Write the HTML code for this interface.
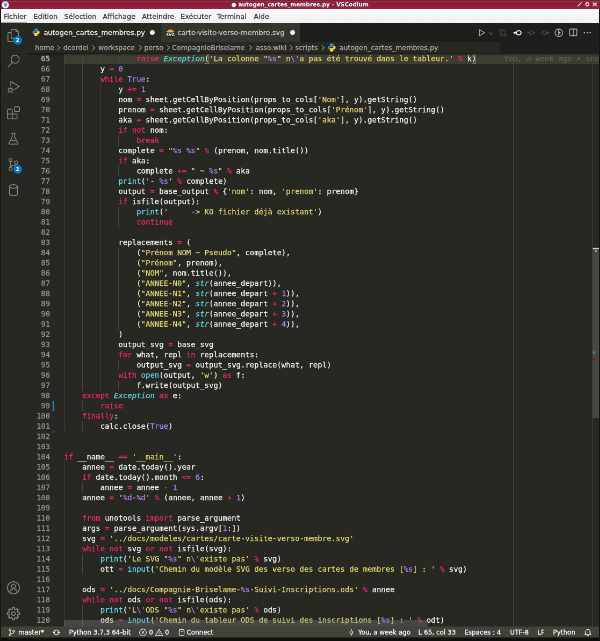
<!DOCTYPE html>
<html lang="fr"><head><meta charset="utf-8"><title>autogen_cartes_membres.py - VSCodium</title>
<style>
html,body{margin:0;padding:0;background:#1a1a17;overflow:hidden}
body{width:600px;height:641px;position:relative}
#root{--s:0.5373;position:absolute;left:0;top:0;width:calc(600px/var(--s));height:calc(641px/var(--s));transform:scale(0.5373);transform-origin:0 0;will-change:transform;background:#141411;font-family:"DejaVu Sans","Liberation Sans",sans-serif;font-size:13px;color:#f8f8f2;overflow:hidden}
#root *{box-sizing:border-box}
.abs{position:absolute}
.tx{position:absolute;white-space:pre;-webkit-text-stroke:0.3px}
svg{position:absolute;overflow:visible}
/* title bar */
#title{left:0;top:0;width:100%;height:calc(9.3px/var(--s));background:linear-gradient(#5e1a2d 0,#5e1a2d 1.2px,#a03852 1.6px,#a03852 2.8px,#8a1e3b 3.6px,#8a1e3b 13.5px,#9a2c48 14.5px,#9a2c48 15.5px,#5a1628 17px)}
#title .tl{display:none}
#title .tt{left:0;right:0;top:0;text-align:center;color:#fff;font-weight:bold;font-size:10.55px;line-height:calc(9.1px/var(--s));-webkit-text-stroke:0}
/* menu */
#menu{left:calc(1px/var(--s));top:calc(9.3px/var(--s));width:calc(598.2px/var(--s));height:calc(13.7px/var(--s));background:linear-gradient(#fafafa,#f1f1f1);color:#363636;font-size:13px;line-height:calc(13.5px/var(--s))}
#menu .tx{top:1px}
/* workbench */
#act{left:calc(1px/var(--s));top:calc(22.8px/var(--s));width:48px;height:calc(603.5px/var(--s));background:#272822}
#tabs{left:calc(26.8px/var(--s));top:calc(23px/var(--s));width:calc(572.4px/var(--s));height:35px;background:#1e1f1c}
.tab{position:absolute;top:0;height:35px}
.tab .tx{font-size:13px;line-height:35px;top:0.6px}
#bc{left:calc(26.8px/var(--s));top:calc(41.8px/var(--s));width:calc(572.4px/var(--s));height:22px;background:#1e1f1c}
#bcin{left:calc(26.8px/var(--s));top:calc(41.8px/var(--s));width:calc(473px/var(--s));height:22px;background:#272822}
.bct{top:calc(41.9px/var(--s));color:#acaca6;font-size:12.7px;line-height:22px}
#ed{left:calc(26.8px/var(--s));top:calc(53.4px/var(--s));width:calc(572.4px/var(--s));height:calc(572.9px/var(--s));background:#272822;overflow:hidden}
#nums{position:absolute;left:0;top:0.75px;width:43.3px;font:14px/19px "DejaVu Sans Mono","Liberation Mono",monospace;color:#96968f;text-align:right;-webkit-text-stroke:0.32px}
#nums div{position:absolute;left:0;width:43.3px;height:19px}
#nums .cur{color:#c2c2bf}
#code{position:absolute;left:69.4px;top:0.75px;font:14px/19px "DejaVu Sans Mono","Liberation Mono",monospace;color:#f8f8f2;white-space:pre;-webkit-text-stroke:0.25px}
#code div{position:absolute;left:0;height:19px;white-space:pre}
#code i,#nums i{font-style:normal}
#code .k{color:#f92672}#code .s{color:#e6db74}#code .n{color:#ae81ff}#code .f{color:#66d9ef}#code .t{color:#66d9ef;font-style:italic}
#guides{position:absolute;left:69.4px;top:0.75px}
#guides b{position:absolute;width:1px;background:#464741}
#curline{position:absolute;left:69.4px;top:0.75px;width:1000px;height:19px;background:#3e3d32}
#status{left:calc(1px/var(--s));top:calc(626.3px/var(--s));width:calc(598.2px/var(--s));height:22px;background:#414339}
.st{top:calc(626.3px/var(--s));color:#fff;font-size:12px;line-height:22px}

.badge{position:absolute;width:16px;height:16px;border-radius:8px;background:#007acc;color:#fff;font-size:9px;font-weight:bold;line-height:16px;text-align:center}
.dot{position:absolute;width:8.8px;height:8.8px;border-radius:50%;background:#f8f8f2}
#ruler{position:absolute;left:calc(513.2px/var(--s) - 49.9px);top:0;width:1px;height:100%;background:#464741}
#blame{position:absolute;left:calc(504px/var(--s) - 49.9px);top:0.75px;font:14px/19px "DejaVu Sans Mono","Liberation Mono",monospace;color:#63635b;white-space:pre;-webkit-text-stroke:0.2px}
.bm{position:absolute;top:0.75px;height:19px;width:8.43px;border:1px solid #888;background:rgba(0,100,0,0.1)}
#vsb{position:absolute;right:0;top:0;width:13.4px;height:100%;border-left:1.6px solid #383932}
#vsl{position:absolute;right:0;width:12.2px;top:calc(194.6px/var(--s));height:calc(170px/var(--s));background:rgba(121,121,121,0.4)}
#hsl{position:absolute;left:69.4px;bottom:0;height:12px;width:calc(364px/var(--s));background:rgba(121,121,121,0.4)}
#shadow{position:absolute;left:0;top:0;width:100%;height:6px;box-shadow:rgba(0,0,0,0.75) 0 6px 6px -6px inset}
#gmod{position:absolute;left:calc(52.5px/var(--s) - 49.9px);top:calc(0.75px + 34*19px);width:3.6px;height:19px;background:#1b8cc0}
#gdel{position:absolute;left:calc(52.6px/var(--s) - 49.9px);top:calc(0.75px + 37*19px - 4px);width:0;height:0;border-left:4.5px solid #a3161c;border-top:4px solid transparent;border-bottom:4px solid transparent}
</style></head><body>
<div id="root">
<div id="title" class="abs"><div class="tl"></div><svg width="16" height="16" viewBox="0 0 16 16" style="left:calc(5.5px/var(--s) - 8px);top:calc(4.8px/var(--s) - 8px)"><circle cx="8" cy="8" r="6.600" fill="#eef4fb"/><path d="M4.600 5.500l3-1.500 3.400 1.200.6 2.600L8.600 12l-2.400-2.200z" fill="#62a4ea"/><path d="M7 9l1.600 3 1-3z" fill="#2f7de0"/></svg>
<svg width="12" height="12" viewBox="0 0 12 12" style="left:calc(579.75px/var(--s) - 6px);top:calc(4.5px/var(--s) - 6px)" stroke="#ecccd4" stroke-width="2" fill="none"><path d="M2.500 9.500L9.500 2.500"/></svg>
<svg width="12" height="12" viewBox="0 0 12 12" style="left:calc(587.25px/var(--s) - 6px);top:calc(4.5px/var(--s) - 6px)" stroke="#ecccd4" stroke-width="2.200" fill="none"><circle cx="6" cy="6" r="2.800"/></svg>
<svg width="12" height="12" viewBox="0 0 12 12" style="left:calc(594.85px/var(--s) - 6px);top:calc(4.5px/var(--s) - 6px)" stroke="#ecccd4" stroke-width="2.200" fill="none"><path d="M2.200 2.800L9.800 9.200M9.800 2.800L2.200 9.200"/></svg>
<div class="abs" style="left:0;top:0;width:1.7px;height:calc(9.3px/var(--s));background:rgba(0,0,0,0.45)"></div>
<div class="tx tt">● autogen_cartes_membres.py - VSCodium</div></div>
<div id="menu" class="abs">
<span class="tx" style="left:calc(2.75px/var(--s))">Fichier</span>
<span class="tx" style="left:calc(32.5px/var(--s))">Edition</span>
<span class="tx" style="left:calc(63.25px/var(--s))">Sélection</span>
<span class="tx" style="left:calc(101.75px/var(--s))">Affichage</span>
<span class="tx" style="left:calc(141px/var(--s))">Atteindre</span>
<span class="tx" style="left:calc(179.5px/var(--s))">Exécuter</span>
<span class="tx" style="left:calc(216px/var(--s))">Terminal</span>
<span class="tx" style="left:calc(252.7px/var(--s))">Aide</span>
</div>
<div id="act" class="abs"></div>
<svg width="24" height="24" viewBox="0 0 24 24" style="left:13.13px;top:54.43px" fill="#8c8c86"><path d="M17.5 0h-9L7 1.5V6H2.5L1 7.5v15.07L2.5 24h12.07L16 22.57V18h4.7l1.3-1.43V4.5L17.5 0zm0 2.12l2.38 2.38H17.5V2.12zm-3 20.38h-12v-15H7v9.07L8.5 18h6v4.5zm6-6h-12v-15H16V6h4.5v10.5z"/></svg>
<svg width="24" height="24" viewBox="0 0 24 24" style="left:13.13px;top:102.43px" fill="#8c8c86"><path d="M15.25 0a8.25 8.25 0 0 0-6.18 13.72L1 22.88l1.12 1 8.05-9.12A8.251 8.251 0 1 0 15.25.01V0zm0 15a6.75 6.75 0 1 1 0-13.5 6.75 6.75 0 0 1 0 13.5z"/></svg>
<svg width="24" height="24" viewBox="0 0 24 24" style="left:13.13px;top:150.43px" fill="#8c8c86"><g fill="none" stroke="#8c8c86" stroke-width="1.600" stroke-linejoin="round"><path d="M7.200 10.500V1.500L22.600 10.800 13 17.200"/><circle cx="6.400" cy="18" r="3.300"/><path stroke-width="1.100" d="M0.800 18h2.200M9.800 18h2.200M1.800 13.600l2.200 2M11 13.600l-2.200 2M1.800 22.400l2.200-2M11 22.400l-2.200-2M4.800 13h3.200"/></g></svg>
<svg width="24" height="24" viewBox="0 0 24 24" style="left:13.13px;top:198.43px" fill="#8c8c86"><path d="M13.5 1.5L15 0h7.5L24 1.5V9l-1.5 1.5H15L13.5 9V1.5zm1.5 0V9h7.5V1.5H15zM0 15V6l1.5-1.5H9L10.5 6v7.5H18l1.5 1.5v7.5L18 24H1.5L0 22.5V15zm9-1.5V6H1.5v7.5H9zM9 15H1.5v7.5H9V15zm1.5 7.5H18V15h-7.5v7.5z"/></svg>
<svg width="24" height="24" viewBox="0 0 24 24" style="left:13.13px;top:246.43px" fill="#8c8c86"><g fill="none" stroke="#8c8c86" stroke-width="1.5" stroke-linejoin="round"><path d="M8 1.8h8M9.6 1.8v7.6L3.6 20.6a1 1 0 0 0 .9 1.6h15a1 1 0 0 0 .9-1.6L14.4 9.4V1.8M6.2 16h11.6"/></g></svg>
<svg width="24" height="24" viewBox="0 0 24 24" style="left:13.13px;top:294.43px" fill="#8c8c86"><path d="M21.007 8.222A3.738 3.738 0 0 0 15.045 5.2a3.737 3.737 0 0 0 1.156 6.583 2.988 2.988 0 0 1-2.668 1.67h-2.99a4.456 4.456 0 0 0-2.989 1.165V7.4a3.737 3.737 0 1 0-1.494 0v9.117a3.776 3.776 0 1 0 1.816.099 2.99 2.99 0 0 1 2.668-1.667h2.99a4.484 4.484 0 0 0 4.223-3.039 3.736 3.736 0 0 0 3.25-3.687zM4.565 3.738a2.242 2.242 0 1 1 4.484 0 2.242 2.242 0 0 1-4.484 0zm4.484 16.441a2.242 2.242 0 1 1-4.484 0 2.242 2.242 0 0 1 4.484 0zm8.221-9.715a2.242 2.242 0 1 1 0-4.485 2.242 2.242 0 0 1 0 4.485z"/></svg>
<svg width="24" height="24" viewBox="0 0 24 24" style="left:13.13px;top:342.43px" fill="#8c8c86"><g fill="none" stroke="#8c8c86" stroke-width="1.600"><ellipse cx="12" cy="5" rx="7.400" ry="3.200"/><path d="M4.600 5v14c0 1.800 3.300 3.200 7.400 3.200s7.400-1.400 7.400-3.200V5"/></g></svg>
<svg width="24" height="24" viewBox="0 0 24 24" style="left:13.13px;top:1081.64px" fill="#8c8c86"><g fill="none" stroke="#8c8c86" stroke-width="1.600"><circle cx="12" cy="12" r="11.200"/><circle cx="12" cy="9" r="3.800"/><path d="M5.2 19.4c1-3.6 3.6-5.4 6.8-5.4s5.800 1.8 6.800 5.400"/></g></svg>
<svg width="24" height="24" viewBox="0 0 24 24" style="left:13.13px;top:1129.64px" fill="#8c8c86"><g fill="none" stroke="#8c8c86" stroke-width="1.800" stroke-linejoin="round"><path d="M23.26 10.22 L23.26 13.78 L20.36 14.01 L19.33 16.49 L21.22 18.70 L18.70 21.22 L16.49 19.33 L14.01 20.36 L13.78 23.26 L10.22 23.26 L9.99 20.36 L7.51 19.33 L5.30 21.22 L2.78 18.70 L4.67 16.49 L3.64 14.01 L0.74 13.78 L0.74 10.22 L3.64 9.99 L4.67 7.51 L2.78 5.30 L5.30 2.78 L7.51 4.67 L9.99 3.64 L10.22 0.74 L13.78 0.74 L14.01 3.64 L16.49 4.67 L18.70 2.78 L21.22 5.30 L19.33 7.51 L20.36 9.99Z"/><circle cx="12" cy="12" r="3.400"/></g></svg>
<div class="badge" style="left:24.57px;top:66.63px">2</div>
<div class="badge" style="left:24.57px;top:306.72px">2</div>
<div id="tabs" class="abs">
 <div class="tab" style="left:0;width:calc(133.5px/var(--s));background:#272822"><span class="tx" style="left:31.5px">autogen_cartes_membres.py</span></div>
 <div class="tab" style="left:calc(134px/var(--s));width:calc(139.2px/var(--s));background:#34352f;color:#c9c9c4"><span class="tx" style="left:calc(16.7px/var(--s))">carte-visite-verso-membre.svg</span></div>
</div>
<div id="bc" class="abs"></div><div id="bcin" class="abs"></div>
<svg width="16" height="16" viewBox="0 0 16 16" style="left:888.71px;top:53.05px" fill="none" stroke-width="1.1"><path d="M3.2 2.2v11.6L13 8z" stroke="#c5c5c0" stroke-linejoin="round" stroke-width="1.2"/></svg>
<svg width="16" height="16" viewBox="0 0 16 16" style="left:906.01px;top:53.60px" fill="none" stroke-width="1.1"><path d="M3.800 6L8 10.200 12.200 6" stroke="#aaaaa5" stroke-width="1"/></svg>
<svg width="16" height="16" viewBox="0 0 16 16" style="left:928.35px;top:53.05px" fill="none" stroke-width="1.1"><g stroke="#4c4d48"><circle cx="3.6" cy="3.400" r="1.7"/><circle cx="12.4" cy="12.600" r="1.7"/><path d="M3.600 5.200v5.600a2 2 0 0 0 2 2h2.600M12.400 10.800V5.200a2 2 0 0 0-2-2H7.800M9.400 1.600L7.800 3.200l1.600 1.600M6.600 11.200l1.600 1.600-1.600 1.600"/></g></svg>
<svg width="16" height="16" viewBox="0 0 16 16" style="left:954.59px;top:53.05px" fill="none" stroke-width="1.1"><g stroke="#ffffff" stroke-width="1.900"><ellipse cx="10.400" cy="8" rx="4.400" ry="3.900"/><path d="M5.900 8H3.500"/></g><path d="M0 8L4.200 5v6z" fill="#ffffff"/></svg>
<svg width="16" height="16" viewBox="0 0 16 16" style="left:980.65px;top:53.05px" fill="none" stroke-width="1.1"><g stroke="#5a5b55" stroke-width="1.2"><circle cx="8" cy="8" r="3.700"/><path d="M11.700 8H16M4.300 8H0"/></g></svg>
<svg width="16" height="16" viewBox="0 0 16 16" style="left:1006.89px;top:53.05px" fill="none" stroke-width="1.1"><g stroke="#5a5b55" stroke-width="1.2"><circle cx="6.800" cy="8" r="3.700"/><path d="M10.500 8H13M3.100 8H0"/></g><path d="M16 8L12.400 5.600v4.800z" fill="#5a5b55"/></svg>
<svg width="16" height="16" viewBox="0 0 16 16" style="left:1032.39px;top:52.86px" fill="none" stroke-width="1.1"><g stroke="#c5c5c0" stroke-width="1.3"><circle cx="8" cy="8" r="7"/></g><path d="M7.200 2.500v11h1.200V10l3.200-2.300L8.400 5.600V2.500z" fill="#c5c5c0"/></svg>
<svg width="16" height="16" viewBox="0 0 16 16" style="left:1058.82px;top:52.49px" fill="none" stroke-width="1.1"><g stroke="#c5c5c0" stroke-width="1.500"><rect x="1.400" y="2" width="13.200" height="12.400" rx="0.800"/><path d="M8 2v12.400"/></g></svg>
<svg width="16" height="16" viewBox="0 0 16 16" style="left:1085.43px;top:52.86px" fill="none" stroke-width="1.1"><g fill="#c5c5c0"><circle cx="2.600" cy="8" r="1.250"/><circle cx="8" cy="8" r="1.250"/><circle cx="13.400" cy="8" r="1.250"/></g></svg>
<svg width="16" height="16" viewBox="0 0 16 16" style="left:59.00px;top:52.30px"><path d="M7.900 1C5.700 1 5 1.900 5 3v1.600h3.100v.5H3.500C2.200 5.100 1.300 6.100 1.300 8s.9 2.900 2.200 2.900H5V9.200c0-1.100.9-1.900 2-1.900h3c.9 0 1.600-.7 1.600-1.600V3c0-1.100-1-2-3.700-2z" fill="#3b7db6"/><path d="M7.900 1C5.700 1 5 1.900 5 3v1.600h3.100v.5H3.500C2.200 5.100 1.300 6.100 1.300 8s.9 2.900 2.200 2.900H5V9.200c0-1.100.9-1.900 2-1.900h3c.9 0 1.600-.7 1.600-1.600V3c0-1.100-1-2-3.700-2z" fill="#ffd43b" transform="rotate(180 8 8)"/><circle cx="6.500" cy="2.700" r=".65" fill="#fff"/><circle cx="9.500" cy="13.300" r=".65" fill="#fff"/></svg>
<svg width="16" height="16" viewBox="0 0 16 16" style="left:309.33px;top:53.23px"><path d="M8 0.400l1.600 2.800 2.800-1.800-.3 3.300 3.300.3-2.200 3H2.800l-2.200-3 3.300-.3-.3-3.300 2.800 1.800z" fill="#f6a623"/><circle cx="8" cy="5.800" r="2.400" fill="#ffb13b"/><rect x="0.600" y="7.600" width="14.800" height="7.600" rx="1.600" fill="#1b1b19"/><text x="8" y="13.800" font-size="6.800" font-weight="bold" font-family="DejaVu Sans,Liberation Sans,sans-serif" fill="#f2f2f2" text-anchor="middle">SVG</text></svg>
<svg width="17" height="17" viewBox="0 0 16 16" style="left:609.40px;top:80.46px"><path d="M7.900 1C5.700 1 5 1.900 5 3v1.600h3.100v.5H3.500C2.200 5.100 1.300 6.100 1.300 8s.9 2.900 2.200 2.900H5V9.200c0-1.100.9-1.900 2-1.900h3c.9 0 1.600-.7 1.600-1.600V3c0-1.100-1-2-3.700-2z" fill="#3b7db6"/><path d="M7.900 1C5.700 1 5 1.900 5 3v1.600h3.100v.5H3.500C2.200 5.100 1.300 6.100 1.300 8s.9 2.900 2.200 2.900H5V9.200c0-1.100.9-1.900 2-1.900h3c.9 0 1.600-.7 1.600-1.600V3c0-1.100-1-2-3.700-2z" fill="#ffd43b" transform="rotate(180 8 8)"/><circle cx="6.500" cy="2.700" r=".65" fill="#fff"/><circle cx="9.500" cy="13.300" r=".65" fill="#fff"/></svg>
<div class="dot" style="left:279.43px;top:56.09px"></div>
<div class="dot" style="left:540.36px;top:56.09px"></div>
<svg width="16" height="16" viewBox="0 0 16 16" style="left:100.51px;top:80.59px" fill="none" stroke="#a5a59f" stroke-width="1.200"><path d="M5.800 3.400L10.400 8l-4.600 4.600"/></svg>
<svg width="16" height="16" viewBox="0 0 16 16" style="left:166.39px;top:80.59px" fill="none" stroke="#a5a59f" stroke-width="1.200"><path d="M5.800 3.400L10.400 8l-4.600 4.600"/></svg>
<svg width="16" height="16" viewBox="0 0 16 16" style="left:253.12px;top:80.59px" fill="none" stroke="#a5a59f" stroke-width="1.200"><path d="M5.800 3.400L10.400 8l-4.600 4.600"/></svg>
<svg width="16" height="16" viewBox="0 0 16 16" style="left:304.67px;top:80.59px" fill="none" stroke="#a5a59f" stroke-width="1.200"><path d="M5.800 3.400L10.400 8l-4.600 4.600"/></svg>
<svg width="16" height="16" viewBox="0 0 16 16" style="left:457.85px;top:80.59px" fill="none" stroke="#a5a59f" stroke-width="1.200"><path d="M5.800 3.400L10.400 8l-4.600 4.600"/></svg>
<svg width="16" height="16" viewBox="0 0 16 16" style="left:533.60px;top:80.59px" fill="none" stroke="#a5a59f" stroke-width="1.200"><path d="M5.800 3.400L10.400 8l-4.600 4.600"/></svg>
<svg width="16" height="16" viewBox="0 0 16 16" style="left:593.15px;top:80.59px" fill="none" stroke="#a5a59f" stroke-width="1.200"><path d="M5.800 3.400L10.400 8l-4.600 4.600"/></svg>
<span class="tx bct" style="left:calc(35px/var(--s))">home</span>
<span class="tx bct" style="left:calc(63.3px/var(--s))">dcordel</span>
<span class="tx bct" style="left:calc(98.3px/var(--s))">workspace</span>
<span class="tx bct" style="left:calc(144.3px/var(--s))">perso</span>
<span class="tx bct" style="left:calc(172px/var(--s))">CompagnieBriselame</span>
<span class="tx bct" style="left:calc(255.7px/var(--s))">asso.wiki</span>
<span class="tx bct" style="left:calc(295.3px/var(--s))">scripts</span>
<span class="tx bct" style="left:calc(339.3px/var(--s))">autogen_cartes_membres.py</span>
<div id="ed" class="abs">
 <div id="curline"></div>
 <div id="ruler"></div>
 <div class="bm" style="left:calc(69.4px + 31*8.4287px)"></div>
 <div class="bm" style="left:calc(69.4px + 90*8.4287px)"></div>
 <div id="gmod"></div><div id="gdel"></div>
 <div id="blame">You, a week ago • second version</div>
 <div id="guides">
<b style="left:0.00px;top:0px;height:703px"></b>
<b style="left:0.00px;top:760px;height:304px"></b>
<b style="left:33.71px;top:0px;height:627px"></b>
<b style="left:33.71px;top:646px;height:19px"></b>
<b style="left:33.71px;top:684px;height:19px"></b>
<b style="left:33.71px;top:798px;height:19px"></b>
<b style="left:33.71px;top:931px;height:38px"></b>
<b style="left:33.71px;top:1026px;height:38px"></b>
<b style="left:67.43px;top:0px;height:19px"></b>
<b style="left:67.43px;top:57px;height:570px"></b>
<b style="left:101.14px;top:0px;height:19px"></b>
<b style="left:101.14px;top:152px;height:19px"></b>
<b style="left:101.14px;top:209px;height:19px"></b>
<b style="left:101.14px;top:285px;height:38px"></b>
<b style="left:101.14px;top:361px;height:152px"></b>
<b style="left:101.14px;top:570px;height:19px"></b>
<b style="left:101.14px;top:608px;height:19px"></b>
 </div>
 <div id="nums">
<div class="cur" style="top:0px">65</div>
<div style="top:19px">66</div>
<div style="top:38px">67</div>
<div style="top:57px">68</div>
<div style="top:76px">69</div>
<div style="top:95px">70</div>
<div style="top:114px">71</div>
<div style="top:133px">72</div>
<div style="top:152px">73</div>
<div style="top:171px">74</div>
<div style="top:190px">75</div>
<div style="top:209px">76</div>
<div style="top:228px">77</div>
<div style="top:247px">78</div>
<div style="top:266px">79</div>
<div style="top:285px">80</div>
<div style="top:304px">81</div>
<div style="top:323px">82</div>
<div style="top:342px">83</div>
<div style="top:361px">84</div>
<div style="top:380px">85</div>
<div style="top:399px">86</div>
<div style="top:418px">87</div>
<div style="top:437px">88</div>
<div style="top:456px">89</div>
<div style="top:475px">90</div>
<div style="top:494px">91</div>
<div style="top:513px">92</div>
<div style="top:532px">93</div>
<div style="top:551px">94</div>
<div style="top:570px">95</div>
<div style="top:589px">96</div>
<div style="top:608px">97</div>
<div style="top:627px">98</div>
<div style="top:646px">99</div>
<div style="top:665px">100</div>
<div style="top:684px">101</div>
<div style="top:703px">102</div>
<div style="top:722px">103</div>
<div style="top:741px">104</div>
<div style="top:760px">105</div>
<div style="top:779px">106</div>
<div style="top:798px">107</div>
<div style="top:817px">108</div>
<div style="top:836px">109</div>
<div style="top:855px">110</div>
<div style="top:874px">111</div>
<div style="top:893px">112</div>
<div style="top:912px">113</div>
<div style="top:931px">114</div>
<div style="top:950px">115</div>
<div style="top:969px">116</div>
<div style="top:988px">117</div>
<div style="top:1007px">118</div>
<div style="top:1026px">119</div>
<div style="top:1045px">120</div>
 </div>
 <div id="code">
<div style="top:0px">                <i class="k">raise</i> <i class="t">Exception</i>(<i class="s">'La colonne "</i><i class="n">%s</i><i class="s">" n</i><i class="n">\'</i><i class="s">a pas été trouvé dans le tableur.'</i> <i class="k">%</i> k)</div>
<div style="top:19px">        y <i class="k">=</i> <i class="n">0</i></div>
<div style="top:38px">        <i class="k">while</i> <i class="n">True</i>:</div>
<div style="top:57px">            y <i class="k">+=</i> <i class="n">1</i></div>
<div style="top:76px">            nom <i class="k">=</i> sheet.getCellByPosition(props_to_cols[<i class="s">'Nom'</i>], y).getString()</div>
<div style="top:95px">            prenom <i class="k">=</i> sheet.getCellByPosition(props_to_cols[<i class="s">'Prénom'</i>], y).getString()</div>
<div style="top:114px">            aka <i class="k">=</i> sheet.getCellByPosition(props_to_cols[<i class="s">'aka'</i>], y).getString()</div>
<div style="top:133px">            <i class="k">if</i> <i class="k">not</i> nom:</div>
<div style="top:152px">                <i class="k">break</i></div>
<div style="top:171px">            complete <i class="k">=</i> <i class="s">"</i><i class="n">%s</i><i class="s"> </i><i class="n">%s</i><i class="s">"</i> <i class="k">%</i> (prenom, nom.title())</div>
<div style="top:190px">            <i class="k">if</i> aka:</div>
<div style="top:209px">                complete <i class="k">+=</i> <i class="s">" ~ </i><i class="n">%s</i><i class="s">"</i> <i class="k">%</i> aka</div>
<div style="top:228px">            <i class="f">print</i>(<i class="s">'- </i><i class="n">%s</i><i class="s">'</i> <i class="k">%</i> complete)</div>
<div style="top:247px">            output <i class="k">=</i> base_output <i class="k">%</i> {<i class="s">'nom'</i>: nom, <i class="s">'prenom'</i>: prenom}</div>
<div style="top:266px">            <i class="k">if</i> isfile(output):</div>
<div style="top:285px">                <i class="f">print</i>(<i class="s">'     -&gt; KO fichier déjà existant'</i>)</div>
<div style="top:304px">                <i class="k">continue</i></div>
<div style="top:323px"></div>
<div style="top:342px">            replacements <i class="k">=</i> (</div>
<div style="top:361px">                (<i class="s">"Prénom NOM ~ Pseudo"</i>, complete),</div>
<div style="top:380px">                (<i class="s">"Prénom"</i>, prenom),</div>
<div style="top:399px">                (<i class="s">"NOM"</i>, nom.title()),</div>
<div style="top:418px">                (<i class="s">"ANNEE-N0"</i>, <i class="t">str</i>(annee_depart)),</div>
<div style="top:437px">                (<i class="s">"ANNEE-N1"</i>, <i class="t">str</i>(annee_depart <i class="k">+</i> <i class="n">1</i>)),</div>
<div style="top:456px">                (<i class="s">"ANNEE-N2"</i>, <i class="t">str</i>(annee_depart <i class="k">+</i> <i class="n">2</i>)),</div>
<div style="top:475px">                (<i class="s">"ANNEE-N3"</i>, <i class="t">str</i>(annee_depart <i class="k">+</i> <i class="n">3</i>)),</div>
<div style="top:494px">                (<i class="s">"ANNEE-N4"</i>, <i class="t">str</i>(annee_depart <i class="k">+</i> <i class="n">4</i>)),</div>
<div style="top:513px">            )</div>
<div style="top:532px">            output_svg <i class="k">=</i> base_svg</div>
<div style="top:551px">            <i class="k">for</i> what, repl <i class="k">in</i> replacements:</div>
<div style="top:570px">                output_svg <i class="k">=</i> output_svg.replace(what, repl)</div>
<div style="top:589px">            <i class="k">with</i> <i class="f">open</i>(output, <i class="s">'w'</i>) <i class="k">as</i> f:</div>
<div style="top:608px">                f.write(output_svg)</div>
<div style="top:627px">    <i class="k">except</i> <i class="t">Exception</i> <i class="k">as</i> e:</div>
<div style="top:646px">        <i class="k">raise</i></div>
<div style="top:665px">    <i class="k">finally</i>:</div>
<div style="top:684px">        calc.close(<i class="n">True</i>)</div>
<div style="top:703px"></div>
<div style="top:722px"></div>
<div style="top:741px"><i class="k">if</i> __name__ <i class="k">==</i> <i class="s">'__main__'</i>:</div>
<div style="top:760px">    annee <i class="k">=</i> date.today().year</div>
<div style="top:779px">    <i class="k">if</i> date.today().month <i class="k">&lt;=</i> <i class="n">6</i>:</div>
<div style="top:798px">        annee <i class="k">=</i> annee <i class="k">-</i> <i class="n">1</i></div>
<div style="top:817px">    annee <i class="k">=</i> <i class="s">'</i><i class="n">%d</i><i class="s">-</i><i class="n">%d</i><i class="s">'</i> <i class="k">%</i> (annee, annee <i class="k">+</i> <i class="n">1</i>)</div>
<div style="top:836px"></div>
<div style="top:855px">    <i class="k">from</i> unotools <i class="k">import</i> parse_argument</div>
<div style="top:874px">    args <i class="k">=</i> parse_argument(sys.argv[<i class="n">1</i>:])</div>
<div style="top:893px">    svg <i class="k">=</i> <i class="s">'../docs/modeles/cartes/carte-visite-verso-membre.svg'</i></div>
<div style="top:912px">    <i class="k">while</i> <i class="k">not</i> svg <i class="k">or</i> <i class="k">not</i> isfile(svg):</div>
<div style="top:931px">        <i class="f">print</i>(<i class="s">'Le SVG "</i><i class="n">%s</i><i class="s">" n</i><i class="n">\'</i><i class="s">existe pas'</i> <i class="k">%</i> svg)</div>
<div style="top:950px">        ott <i class="k">=</i> <i class="f">input</i>(<i class="s">'Chemin du modèle SVG des verso des cartes de membres [</i><i class="n">%s</i><i class="s">] : '</i> <i class="k">%</i> svg)</div>
<div style="top:969px"></div>
<div style="top:988px">    ods <i class="k">=</i> <i class="s">'../docs/Compagnie-Briselame-</i><i class="n">%s</i><i class="s">-Suivi-Inscriptions.ods'</i> <i class="k">%</i> annee</div>
<div style="top:1007px">    <i class="k">while</i> <i class="k">not</i> ods <i class="k">or</i> <i class="k">not</i> isfile(ods):</div>
<div style="top:1026px">        <i class="f">print</i>(<i class="s">'L</i><i class="n">\'</i><i class="s">ODS "</i><i class="n">%s</i><i class="s">" n</i><i class="n">\'</i><i class="s">existe pas'</i> <i class="k">%</i> ods)</div>
<div style="top:1045px">        ods <i class="k">=</i> <i class="f">input</i>(<i class="s">'Chemin du tableur ODS de suivi des inscriptions [</i><i class="n">%s</i><i class="s">] : '</i> <i class="k">%</i> odt)</div>
 </div>
 <div id="vsb"></div><div id="vsl"></div>
 <div class="ovm" style="position:absolute;right:0;width:12.2px;height:2.8px;top:calc(194.2px/var(--s));background:#d0d0ca"></div><div class="ovm" style="position:absolute;right:4.2px;width:4px;height:4px;top:calc(196.2px/var(--s));background:#9a9a95"></div>
 <div class="ovm" style="position:absolute;right:8.5px;width:4px;height:5px;top:calc(298px/var(--s));background:#1b8cc0"></div>
 <div class="ovm" style="position:absolute;right:8.5px;width:4px;height:5px;top:calc(304px/var(--s));background:#a3161c"></div>
 <div id="hsl"></div>
 <div id="shadow"></div>
</div>
<div id="status" class="abs"></div>
<div class="abs" style="left:0;top:calc(637.5px/var(--s));width:100%;height:calc(3.5px/var(--s));background:linear-gradient(#2a2b26,#121210 2.2px,#0c0c0a)"></div>
<svg width="16" height="16" viewBox="0 0 16 16" style="left:14.15px;top:1168.81px" fill="none" stroke="#ffffff" stroke-width="1.1"><circle cx="5" cy="3" r="1.700"/><circle cx="5" cy="13" r="1.700"/><circle cx="11.500" cy="5.500" r="1.700"/><path d="M5 4.700v6.600M11.500 7.200c0 2-1.500 2.800-3.500 2.800S5 10.500 5 11.300"/></svg>
<svg width="16" height="16" viewBox="0 0 16 16" style="left:97.34px;top:1168.81px" fill="none" stroke="#ffffff" stroke-width="1.1"><circle cx="8" cy="8" r="4.500" stroke-width="1.300"/><path d="M1.200 6.400L3.500 9.200 5.800 6.400M10.200 9.600L12.500 6.800 14.800 9.600" stroke-width="1.400" stroke-linejoin="round"/></svg>
<svg width="16" height="16" viewBox="0 0 16 16" style="left:258.33px;top:1168.81px" fill="none" stroke="#ffffff" stroke-width="1.1"><circle cx="8" cy="8" r="6.400"/><path d="M5.600 5.600l4.800 4.800M10.400 5.600l-4.800 4.800"/></svg>
<svg width="16" height="16" viewBox="0 0 16 16" style="left:287.55px;top:1168.81px" fill="none" stroke="#ffffff" stroke-width="1.1"><path d="M8 2.200L14.600 13.800H1.400z" stroke-linejoin="round"/><path d="M8 6.400v4M8 11.300v1.200"/></svg>
<svg width="16" height="16" viewBox="0 0 16 16" style="left:329.80px;top:1169.18px" fill="none" stroke="#ffffff" stroke-width="1.1"><ellipse cx="8" cy="4" rx="4.600" ry="1.900"/><path d="M3.400 4v8c0 1 2 1.900 4.600 1.900s4.600-.9 4.600-1.900V4"/></svg>
<svg width="16" height="16" viewBox="0 0 16 16" style="left:645.82px;top:1168.81px" fill="none" stroke="#ffffff" stroke-width="1.1"><circle cx="8" cy="8" r="2.800"/><path d="M8 1.500v3.700M8 10.800v3.700"/></svg>
<svg width="16" height="16" viewBox="0 0 16 16" style="left:1085.80px;top:1168.81px" fill="none" stroke="#ffffff" stroke-width="1.1"><path d="M2.400 12.200h11.200l-1.500-2V6.800a4.100 4.100 0 0 0-8.200 0v3.400zM6.400 12.600a1.600 1.600 0 0 0 3.200 0" stroke-linejoin="round" stroke-width="1.300"/></svg>
<span class="tx st" style="left:calc(18.3px/var(--s))">master*</span>
<span class="tx st" style="left:calc(69px/var(--s))">Python 3.7.3 64-bit</span>
<span class="tx st" style="left:calc(149px/var(--s))">0</span>
<span class="tx st" style="left:calc(165px/var(--s))">0</span>
<span class="tx st" style="left:calc(186.7px/var(--s))">Connect</span>
<span class="tx st" style="left:calc(358.3px/var(--s))">You, a week ago</span>
<span class="tx st" style="left:calc(418.3px/var(--s))">L 65, col 33</span>
<span class="tx st" style="left:calc(464.3px/var(--s))">Espaces : 4</span>
<span class="tx st" style="left:calc(510px/var(--s))">UTF-8</span>
<span class="tx st" style="left:calc(537.3px/var(--s))">LF</span>
<span class="tx st" style="left:calc(553px/var(--s))">Python</span>
</div>
</body></html>
